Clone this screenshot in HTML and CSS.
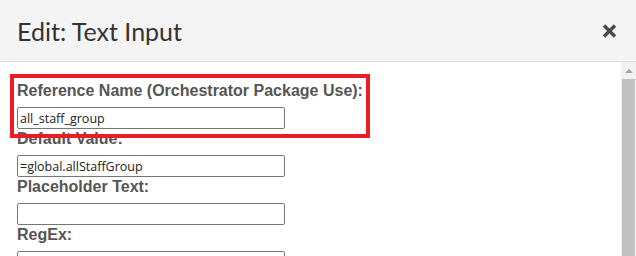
FILE: index.html
```html
<!DOCTYPE html>
<html lang="en">
<head>
    <meta charset="UTF-8">
    <title>Edit: Text Input</title>
    <link rel="stylesheet" href="styles.css">
</head>
<body>
    <div class="modal">
        <div class="modal-header">
            <h1 class="modal-title">Edit: Text Input</h1>
            <button class="close" aria-label="Close">
                <svg width="15" height="14" viewBox="0 0 15 14">
                    <path d="M2 1.5 L13 12.5 M13 1.5 L2 12.5" stroke="#4a4a4a" stroke-width="3.4" fill="none"/>
                </svg>
            </button>
        </div>
        <div class="modal-body">
            <div class="fields">
                <div class="highlight">
                    <label class="field-label">Reference Name (Orchestrator Package Use):</label>
                    <input class="field-input" type="text" value="all_staff_group">
                </div>
                <label class="field-label">Default Value:</label>
                <input class="field-input" type="text" value="=global.allStaffGroup">
                <label class="field-label">Placeholder Text:</label>
                <input class="field-input" type="text" value="">
                <label class="field-label">RegEx:</label>
                <input class="field-input" type="text" value="">
            </div>
            <div class="scrollbar">
                <div class="scroll-up"></div>
                <div class="scroll-thumb"></div>
            </div>
        </div>
    </div>
</body>
</html>
```

FILE: styles.css
```css
html, body { margin: 0; padding: 0; background: #fff; overflow: hidden; }
body { font-family: "Liberation Sans", Arial, sans-serif; width: 636px; height: 256px; }
.modal { display: flex; flex-direction: column; height: 256px; }
.modal-header { height: 62px; box-sizing: border-box; background: #f4f4f4; border-bottom: 1px solid #dcdcdc; display: flex; align-items: center; justify-content: space-between; padding: 0 19px 0 17px; }
.modal-title { margin: 0; font-family: Lato, "Open Sans", sans-serif; font-weight: 400; font-size: 25px; line-height: 1; color: #333; padding-top: 2px; }
.close { background: none; border: none; padding: 0; width: 15px; height: 14px; cursor: pointer; display: block; }
.close svg { display: block; }
.modal-body { flex: 1; display: flex; overflow: hidden; }
.fields { flex: 1; padding: 19px 0 0 17px; }
.highlight { position: relative; z-index: 1; width: 360px; box-sizing: border-box; border: 4px solid #ed1c24; margin: -7px 0 -9px -7px; padding: 3px 0 5px 3px; }
.field-label { display: block; font-weight: bold; font-size: 16px; line-height: 20px; color: #555; margin-bottom: 6px; white-space: nowrap; }
.field-input { display: block; width: 268px; height: 22px; box-sizing: border-box; margin: 0; border: 1px solid #767676; border-radius: 2px; padding: 0 2px; font-family: "Open Sans", sans-serif; font-size: 12.5px; color: #222; background: #fff; }
.scrollbar { width: 15px; background: #f1f1f1; display: flex; flex-direction: column; align-items: center; }
.scroll-up { height: 17px; width: 15px; display: flex; align-items: center; justify-content: center; }
.scroll-up::before { content: ""; border-left: 4px solid transparent; border-right: 4px solid transparent; border-bottom: 4px solid #a3a3a3; }
.scroll-thumb { flex: 1; width: 13px; background: #c1c1c1; }
```
